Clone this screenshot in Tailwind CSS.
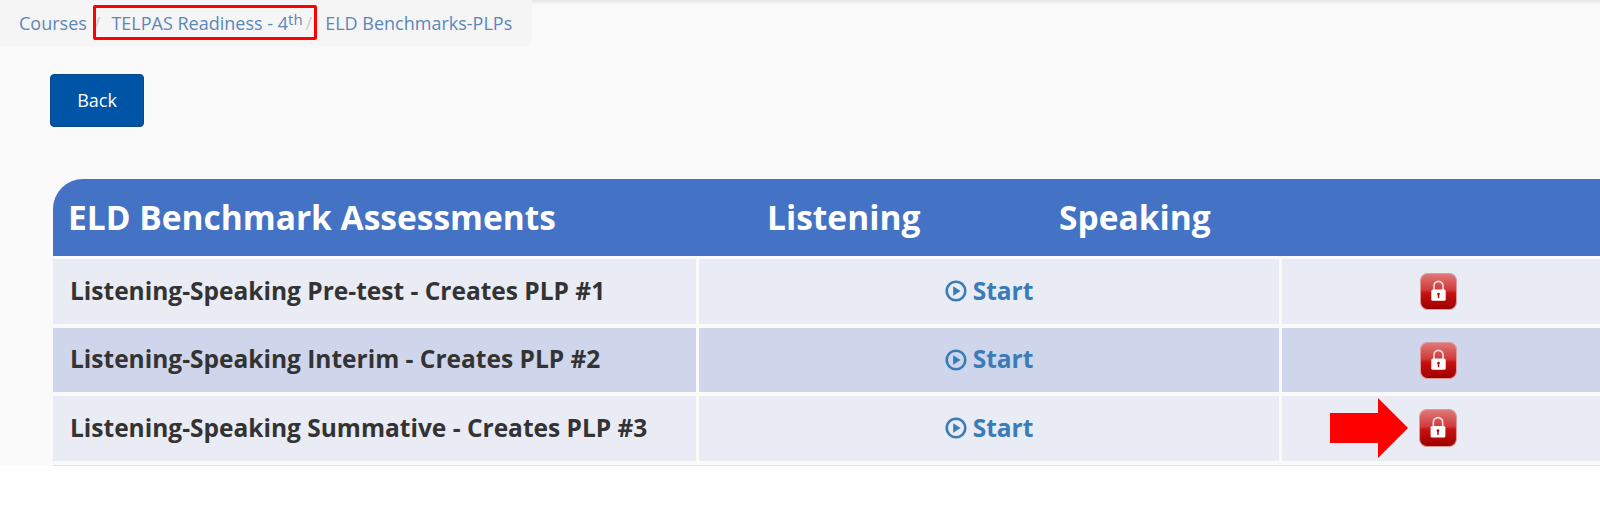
<!DOCTYPE html>
<html lang="en">
<head>
    <meta charset="UTF-8">
    <title>ELD Benchmarks-PLPs</title>
    <script src="https://cdn.jsdelivr.net/npm/@tailwindcss/browser@4"></script>
</head>
<body class="bg-white font-['Open_Sans',sans-serif] overflow-hidden h-[517px]">
    <!-- shared lock button -->
    <svg class="absolute w-0 h-0">
        <defs>
            <linearGradient id="lockFill" x1="0" y1="0" x2="0" y2="1">
                <stop offset="0" stop-color="#e07a7a"/>
                <stop offset="0.46" stop-color="#d03a3a"/>
                <stop offset="0.54" stop-color="#c81010"/>
                <stop offset="1" stop-color="#9c0000"/>
            </linearGradient>
            <symbol id="lock" viewBox="0 0 36 36">
                <rect x="0.5" y="0.5" width="35" height="35" rx="7" fill="url(#lockFill)" stroke="#dc9a9a" stroke-width="1"/>
                <path d="M13.6 16.5v-4a4.4 4.4 0 0 1 8.8 0v4" fill="none" stroke="#f4dcdc" stroke-width="1.6"/>
                <rect x="11" y="16" width="14" height="11" rx="1.5" fill="#fff"/>
                <circle cx="18" cy="20.4" r="1.3" fill="#a80d0d"/>
                <rect x="17.3" y="20.5" width="1.4" height="4" fill="#a80d0d"/>
            </symbol>
        </defs>
    </svg>

    <div class="relative h-[466px] bg-[#fafafa] overflow-hidden">
        <div class="absolute top-0 left-[532px] right-0 h-[5px] bg-gradient-to-b from-[#e6e6e6] to-[#fafafa]"></div>

        <!-- breadcrumb -->
        <nav class="w-[532px] h-[46px] bg-[#f5f5f5] rounded-br-md flex items-center pl-[19px] text-[18px] text-[#5b87b9] whitespace-nowrap">
            <a>Courses</a>
            <span class="ml-[7px] text-[#ccc]">/</span>
            <a class="ml-[11px]">TELPAS Readiness - 4<sup class="text-[15px] relative -top-[5px]">th</sup></a>
            <span class="ml-[3px] text-[#ccc]">/</span>
            <a class="ml-[13px]">ELD Benchmarks-PLPs</a>
        </nav>
        <div class="absolute left-[93px] top-[5px] w-[224px] h-[35px] border-[3px] border-[#ff0000] rounded-[2px]"></div>

        <button class="block mt-[28px] ml-[50px] w-[94px] h-[53px] bg-[#0054a6] border border-[#0a4a8c] rounded-[4px] text-white text-[18px]">Back</button>

        <!-- assessments table -->
        <div class="mt-[52px] ml-[53px] w-[1600px]">
            <div class="h-[76.5px] bg-[#4472c4] rounded-tl-[30px] flex items-center text-white font-bold text-[33.5px] whitespace-nowrap">
                <span class="ml-[15px] w-[699px]">ELD Benchmark Assessments</span>
                <span class="w-[292px]">Listening</span>
                <span>Speaking</span>
            </div>
            <div class="mt-[3.5px] grid grid-cols-[643px_580px_1fr] gap-x-[3px] gap-y-[4px] text-[24.5px] font-bold">
                <div class="h-[64.5px] bg-[#e9ebf5] flex items-center pl-[17px] text-[#333]">Listening-Speaking Pre-test - Creates PLP #1</div>
                <div class="h-[64.5px] bg-[#e9ebf5] flex items-center justify-center text-[#3a7cb8]">
                    <svg class="w-[22px] h-[22px] mr-[6px]" viewBox="0 0 22 22"><circle cx="11" cy="11" r="9.3" fill="none" stroke="#3a7cb8" stroke-width="2.6"/><path d="M8.2 6.2l7.4 4.8-7.4 4.8z" fill="#3a7cb8"/></svg>Start
                </div>
                <div class="h-[64.5px] bg-[#e9ebf5] pl-[138px] pt-[1px] flex items-center"><svg class="w-[37px] h-[37px]"><use href="#lock"/></svg></div>

                <div class="h-[64.5px] bg-[#cfd5ea] flex items-center pl-[17px] text-[#333]">Listening-Speaking Interim - Creates PLP #2</div>
                <div class="h-[64.5px] bg-[#cfd5ea] flex items-center justify-center text-[#3a7cb8]">
                    <svg class="w-[22px] h-[22px] mr-[6px]" viewBox="0 0 22 22"><circle cx="11" cy="11" r="9.3" fill="none" stroke="#3a7cb8" stroke-width="2.6"/><path d="M8.2 6.2l7.4 4.8-7.4 4.8z" fill="#3a7cb8"/></svg>Start
                </div>
                <div class="h-[64.5px] bg-[#cfd5ea] pl-[138px] pt-[1px] flex items-center"><svg class="w-[37px] h-[37px]"><use href="#lock"/></svg></div>

                <div class="h-[64.5px] bg-[#e9ebf5] flex items-center pl-[17px] text-[#333]">Listening-Speaking Summative - Creates PLP #3</div>
                <div class="h-[64.5px] bg-[#e9ebf5] flex items-center justify-center text-[#3a7cb8]">
                    <svg class="w-[22px] h-[22px] mr-[6px]" viewBox="0 0 22 22"><circle cx="11" cy="11" r="9.3" fill="none" stroke="#3a7cb8" stroke-width="2.6"/><path d="M8.2 6.2l7.4 4.8-7.4 4.8z" fill="#3a7cb8"/></svg>Start
                </div>
                <div class="h-[64.5px] bg-[#e9ebf5] pl-[137px] flex items-center"><svg class="w-[38px] h-[38px]"><use href="#lock"/></svg></div>
            </div>
            <!-- top edge of the next row, cut off by the page -->
            <div class="mt-[4px] h-[1px] bg-[#e3e6f2]"></div>
        </div>

        <!-- annotation arrow -->
        <svg class="absolute left-[1330px] top-[398px] w-[78px] h-[60px]" viewBox="0 0 78 60"><path d="M0 15h48V0l30 30-30 30V45H0z" fill="#ff0000"/></svg>
    </div>
</body>
</html>
